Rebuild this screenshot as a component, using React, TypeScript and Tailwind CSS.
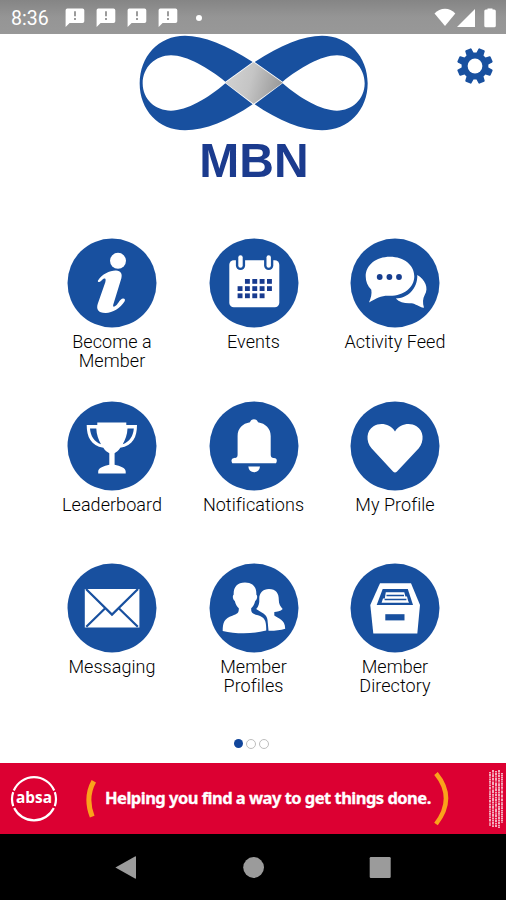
import type { ReactNode } from "react";

const BLUE = "#18509f";

function Notice() {
  return (
    <svg viewBox="0 0 20 20" className="h-5 w-5 shrink-0">
      <path d="M2.5 0.5h15a1.8 1.8 0 0 1 1.8 1.8v11a1.8 1.8 0 0 1-1.8 1.8H4.6L.6 19V2.3A1.8 1.8 0 0 1 2.5.5z" fill="#fff" />
      <path d="M10 3.3v5M10 10v2" stroke="#8b8b8b" strokeWidth="1.7" />
    </svg>
  );
}

function StatusBar() {
  return (
    <header className="flex h-[34px] shrink-0 items-center bg-linear-to-b from-[#858585] via-[#959595] to-[#989898] pt-[2px] pr-[8px] pl-[11px] text-white">
      <span className="w-[54px] pt-[2px] font-[Roboto] text-[19.5px] leading-none">8:36</span>
      <div className="flex gap-[11px]">
        <Notice />
        <Notice />
        <Notice />
        <Notice />
      </div>
      <i className="ml-[18px] h-[6px] w-[6px] rounded-full bg-white" />
      <svg viewBox="0 0 64 20" className="ml-auto h-5 w-16" fill="#fff">
        <path d="M0.5 5.5C6-.8 16-.8 21.3 5.5L11 18z" />
        <path d="M41 1v18H23z" />
        <path d="M53.5 1.5v-1h5v1h1.7a1.6 1.6 0 0 1 1.6 1.6v14.6a1.6 1.6 0 0 1-1.6 1.6h-8.3a1.6 1.6 0 0 1-1.6-1.6V3.1a1.6 1.6 0 0 1 1.6-1.6z" />
      </svg>
    </header>
  );
}

function Gear() {
  return (
    <svg viewBox="-18 -18 36 36" className="absolute top-[14px] right-[13px] h-9 w-9">
      <g fill={BLUE}>
        <circle r="13.4" />
        {[22.5, 67.5, 112.5, 157.5, 202.5, 247.5, 292.5, 337.5].map((a) => (
          <path key={a} d="M-3.9-12l.5-5.1q.2-.9 1-.9h4.8q.8 0 1 .9l.5 5.1z" transform={`rotate(${a})`} />
        ))}
      </g>
      <circle r="7.4" fill="#fff" />
    </svg>
  );
}

function Logo() {
  return (
    <svg viewBox="0 0 750 480" className="h-[160px] w-[250px]">
      <defs>
        <linearGradient id="silver" x1="0" y1="0.3" x2="1" y2="0.5">
          <stop offset="0" stopColor="#d2d2d2" />
          <stop offset="0.45" stopColor="#c5c5c5" />
          <stop offset="1" stopColor="#989898" />
        </linearGradient>
      </defs>
      <g fill={BLUE} fillRule="evenodd">
        <path d="M368 96C290 45 220 17 165 17C85 17 29 80 29 160C29 240 85 301 165 301C225 301 295 273 368 223L286 160C235 205 170 242 123 242C76 242 38 208 38 160C38 112 76 76 123 76C170 76 235 114 286 155Z" />
        <path d="M374 96C452 45 520 17 576 17C656 17 713 80 713 160C713 240 656 301 576 301C516 301 447 273 374 223L458 160C509 205 574 242 621 242C666 242 704 208 704 160C704 112 666 76 621 76C574 76 509 114 458 155Z" />
      </g>
      <path d="M371 97L458 158L371 221L286 158Z" fill="url(#silver)" />
      <text x="208" y="440" fontFamily="Liberation Sans, Arial, sans-serif" fontWeight="700" fontSize="145" textLength="328" lengthAdjust="spacingAndGlyphs" fill="#1b3b8e">MBN</text>
    </svg>
  );
}

const info = (
  <>
    <circle cx="51" cy="22.8" r="8" />
    <path d="M31 42.5C35 36 43 32.3 49 32.5C54 32.7 55.6 36 54.3 40.5L46.3 66.5C45.6 69 47 69.3 49 67.6C51.5 65.4 53 60.8 56 60.5C58 60.4 58.5 61.8 57.5 63.5C53.5 70 45 75.2 38.5 75C30.8 74.8 29.2 71.2 30.7 66L38.3 44.2C39 41.2 38.6 39.8 37 40.6C35.2 41.4 34.4 43.6 32.4 44C31.2 44.2 30.4 43.5 31 42.5Z" />
  </>
);

const calendarDays = [
  [1, 0], [2, 0], [3, 0], [4, 0],
  [0, 1], [1, 1], [2, 1], [3, 1], [4, 1],
  [0, 2], [1, 2], [2, 2], [3, 2],
];

const calendar = (
  <>
    <rect x="20.3" y="22.3" width="50" height="47" rx="4.5" />
    {[31.5, 59.7].map((x) => (
      <g key={x}>
        <rect x={x - 4.6} y="15" width="9.2" height="17" rx="4.6" fill={BLUE} />
        <rect x={x - 2.2} y="17.3" width="4.4" height="12.4" rx="2.2" />
      </g>
    ))}
    {calendarDays.map(([c, r]) => (
      <rect key={`${c}-${r}`} x={28.6 + c * 7.35} y={41 + r * 7.2} width="4.9" height="4.8" fill="#183b8f" />
    ))}
  </>
);

const chat = (
  <>
    <path d="M67.3 37C75 41.5 79 50.2 74.8 56.8C72.7 60.5 72.5 65 74 69.8C68.5 68.8 65.8 65.7 61.5 65.2C55.5 65.8 49.5 64.2 45.8 60.4C57 60.5 67.8 51 67.3 37Z" />
    <path d="M40 18.7C54 18.7 64.3 27 64.3 38.2C64.3 49.4 54 57.8 40 57.8C31.5 57.3 27 60 19 64.4C21 59.5 22 56 21.3 51.7C17.5 48 15.7 43.5 15.7 38.2C15.7 27 26 18.7 40 18.7Z" />
    <g fill="#173e8f">
      <circle cx="29.7" cy="39" r="2.9" />
      <circle cx="39.4" cy="39" r="2.9" />
      <circle cx="49" cy="39" r="2.9" />
    </g>
  </>
);

const trophy = (
  <>
    <path d="M30.3 21.5H59.3V24H70C70 36 66 44.5 53.3 46.8C51.5 49.7 49.3 51.3 47.6 52.2V63.7C53 64.8 58.7 66.7 58.7 70.5V72.6H31.2V70.5C31.2 66.7 37 64.8 42.3 63.7V52.2C40.5 51.3 38 49.7 36.3 46.8C24 44.5 19.7 36 19.7 24H30.3Z" />
    <path d="M23 27.5H29.3C29.5 33.5 31.5 39 34 43.2C27.3 41 23.5 35 23 27.5ZM66.8 27.5H60.5C60.3 33.5 58.3 39 55.7 43.2C62.5 41 66.3 35 66.8 27.5Z" fill={BLUE} />
  </>
);

const bell = (
  <>
    <path d="M45 18.3C47 18.3 48.4 19.5 49 21.3C56.5 22.5 61.7 27.5 61.7 35V53.5C61.7 56.7 63.5 57 66 57.2C68.2 57.5 68.2 60.5 67 62.3H23.3C22 60.5 22.2 57.5 24.4 57.2C27 57 28.6 56.7 28.6 53.5V35C28.6 27.5 33.5 22.5 41 21.3C41.6 19.5 43 18.3 45 18.3Z" />
    <path d="M39.3 65.5H51C50.5 69.3 48.5 71.2 45.1 71.2C41.8 71.2 39.7 69.3 39.3 65.5Z" />
  </>
);

const heart = (
  <path d="M45 30.5C50.2 22.5 60 21.4 66.5 25.3C73.8 29.7 74.6 40.2 68.8 47.3L47 70.5Q45 72.5 43 70.5L21.5 47.3C15.5 40.2 16.3 29.7 23.5 25.3C30 21.4 39.8 22.5 45 30.5Z" />
);

const envelope = (
  <>
    <rect x="17.8" y="26" width="54.6" height="38.5" />
    <path d="M19 26L45 51.6L71 26M38.2 45.2L19.3 63.8M51.8 45.2L70.8 63.8" fill="none" stroke={BLUE} strokeWidth="2.2" />
  </>
);

const people = (
  <>
    <path d="M60 26C67 26 70 30.5 69.8 37C69.8 41 71.3 43.5 73.7 46C71.5 48.3 68 49 65.3 49V52.5C69 55.3 76.2 56.3 76.2 65.8C71 67.5 64 68 59.5 67.8L58.5 57C58 52 54 50 50.7 48.2C49 47.2 48.3 46.7 47.2 46C49.7 43.5 50.5 40 50.3 36C50 30 54 26 60 26Z" />
    <path d="M36 19.5C44 19.5 47.8 24.5 47.3 31.5C49 33 48 37 46.2 38C45.3 41.5 43.8 43.8 42.2 45.3C42 50 43.5 50.8 49 52.3C55.5 54.2 57.5 57.5 57.2 67.5C44 71.2 27 71.2 13.7 68C13.7 59 15.5 55.5 23.3 52.7C28.5 50.8 30 50 29.8 45.3C28.2 43.8 26.7 41.5 25.8 38C24 37 23 33 24.7 31.5C24.3 24.5 28 19.5 36 19.5Z" stroke={BLUE} strokeWidth="2.6" paintOrder="stroke" />
  </>
);

const cabinet = (
  <>
    <path d="M30 20.2H61L70 42L67.3 70.4H23.3L20.3 42Z" />
    <path d="M32.7 26H57.8L63 42H26.7Z" fill={BLUE} />
    <path d="M35.8 29.3H54.3L55.4 33.6H57L58 37.5L59 39.8H31.6L33 35.5H34.8Z" />
    <path d="M36.5 32.6H54M34.6 36.6H56.4" stroke={BLUE} strokeWidth="1.5" />
    <rect x="35.3" y="51.2" width="19.2" height="6.2" fill={BLUE} />
  </>
);

type Item = { lines: string[]; icon: ReactNode };

const items: Item[] = [
  { lines: ["Become a", "Member"], icon: info },
  { lines: ["Events"], icon: calendar },
  { lines: ["Activity Feed"], icon: chat },
  { lines: ["Leaderboard"], icon: trophy },
  { lines: ["Notifications"], icon: bell },
  { lines: ["My Profile"], icon: heart },
  { lines: ["Messaging"], icon: envelope },
  { lines: ["Member", "Profiles"], icon: people },
  { lines: ["Member", "Directory"], icon: cabinet },
];

function MenuItem({ lines, icon }: Item) {
  return (
    <button className="flex flex-col items-center">
      <svg viewBox="0 0 90 90" className="h-[90px] w-[90px]">
        <circle cx="45" cy="45" r="44.5" fill={BLUE} />
        <g fill="#fff">{icon}</g>
      </svg>
      <span className="mt-[4px] flex flex-col items-center font-[Roboto] text-[18px] leading-[19px] font-light tracking-[0.05px] whitespace-nowrap text-black">
        {lines.map((line) => (
          <span key={line}>{line}</span>
        ))}
      </span>
    </button>
  );
}

function Banner() {
  return (
    <section className="flex h-[71px] shrink-0 items-center bg-[#dc0032] text-white">
      <svg viewBox="0 0 48 48" className="ml-[10px] h-12 w-12 shrink-0">
        <g fill="none" stroke="#fff" strokeWidth="2.2">
          <path d="M3.8 15.5A22 22 0 0 1 44.2 15.5M4.2 33A22 22 0 0 0 43.8 33M3.2 17.2Q.8 24 3.2 31.2M44.8 17.2Q47.2 24 44.8 31.2" />
        </g>
        <text x="6" y="28.3" fontFamily="Open Sans, sans-serif" fontWeight="700" fontSize="16" textLength="36" lengthAdjust="spacingAndGlyphs" fill="#fff">absa</text>
      </svg>
      <svg viewBox="0 0 12 40" className="ml-[27px] h-10 w-3 shrink-0">
        <path d="M8.8 2.2Q-.2 18.5 7.2 37.6" fill="none" stroke="#faa21b" strokeWidth="5" />
      </svg>
      <p className="ml-[8px] w-[328px] font-['Noto_Sans'] text-[16.5px] leading-none font-bold tracking-[-0.52px] whitespace-nowrap [-webkit-text-stroke:0.3px_white]">
        Helping you find a way to get things done.
      </p>
      <svg viewBox="0 0 18 58" className="h-[58px] w-[18px] shrink-0">
        <path d="M3 3.5Q23 28 3 54" fill="none" stroke="#faa21b" strokeWidth="4.5" />
      </svg>
      <svg viewBox="0 0 16 60" className="mr-[2px] ml-auto h-[60px] w-4 shrink-0">
        <g stroke="#fff" strokeWidth="1.7" opacity="0.8">
          <path d="M2 3v54" strokeDasharray="1.5 .6 2.2 .5 1 .6" />
          <path d="M5 1v57" strokeDasharray="2 .6 1.1 .5 3 .7" />
          <path d="M8 2v56" strokeDasharray="1.2 .5 2.8 .7" />
          <path d="M11 1v58" strokeDasharray="2.4 .6 1.3 .4" />
          <path d="M14 4v50" strokeDasharray="1 .5 2 .6" />
        </g>
      </svg>
    </section>
  );
}

function NavBar() {
  return (
    <nav className="grid flex-1 grid-cols-[126.5px_126.5px_126.5px] justify-center bg-black">
      {[
        <path key="back" d="M1.4 12.6L21 1.5Q22 1 22 2V23Q22 24 21 23.5Z" />,
        <circle key="home" cx="13.6" cy="12.5" r="10.4" />,
        <rect key="recent" x="2.7" y="2" width="21" height="21" rx="1.2" />,
      ].map((shape, i) => (
        <button key={i} className="flex items-center justify-center">
          <svg viewBox="0 0 26 25" className="h-[25px] w-[26px]" fill="#9b9b9b">
            {shape}
          </svg>
        </button>
      ))}
    </nav>
  );
}

export default function App() {
  return (
    <div className="flex h-[900px] w-[506px] flex-col overflow-hidden bg-white">
      <StatusBar />
      <main className="relative flex h-[729px] shrink-0 flex-col">
        <Gear />
        <div className="-mt-[4px] ml-[130px] h-[208px]">
          <Logo />
        </div>
        <div className="ml-[41px] grid h-[488px] grid-cols-[142px_141px_142px] grid-rows-[162.5px_162.5px_162.5px] items-start">
          {items.map((item) => (
            <MenuItem key={item.lines.join(" ")} {...item} />
          ))}
        </div>
        <div className="mt-[12.5px] ml-[233.5px] flex items-center gap-[2.5px]">
          <i className="mr-[1px] h-[9px] w-[9px] rounded-full bg-[#11469b]" />
          <i className="h-[10px] w-[10px] rounded-full border border-[#bdbdbd]" />
          <i className="h-[10px] w-[10px] rounded-full border border-[#bdbdbd]" />
        </div>
      </main>
      <Banner />
      <NavBar />
    </div>
  );
}
